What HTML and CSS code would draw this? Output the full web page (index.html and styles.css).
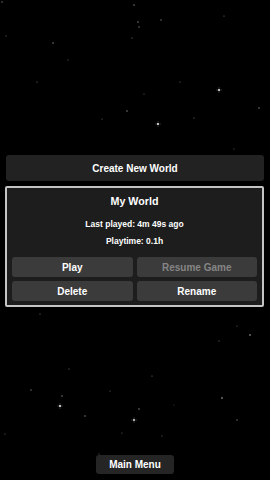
FILE: index.html
```html
<!DOCTYPE html>
<html lang="en">

<head>
    <meta charset="UTF-8" />
    <meta name="viewport" content="width=device-width, initial-scale=1.0" />
    <title>Worlds</title>
    <link rel="stylesheet" href="styles.css">
</head>

<body>
    <div class="screen">
        <!-- starfield behind everything -->
        <svg class="stars" width="270" height="480" viewBox="0 0 270 480">
            <g fill="#7a7a7a">
                <circle cx="2" cy="2" r="0.7" />
                <circle cx="134" cy="5" r="0.8" />
                <circle cx="6" cy="36" r="0.6" />
                <circle cx="53" cy="43" r="0.8" />
                <circle cx="132" cy="38" r="0.6" />
                <circle cx="68" cy="60" r="0.5" />
                <circle cx="37" cy="82" r="0.6" />
                <circle cx="127" cy="111" r="0.8" />
                <circle cx="102" cy="119" r="0.5" />
                <circle cx="138" cy="22" r="0.8" />
                <circle cx="139" cy="27" r="0.7" />
                <circle cx="161" cy="20" r="0.7" />
                <circle cx="224" cy="16" r="0.6" />
                <circle cx="180" cy="82" r="0.5" />
                <circle cx="144" cy="94" r="0.5" />
                <circle cx="259" cy="108" r="0.8" />
                <circle cx="194" cy="118" r="0.6" />
                <circle cx="234" cy="149" r="0.5" />
                <circle cx="40" cy="314" r="0.6" />
                <circle cx="69" cy="369" r="0.6" />
                <circle cx="31" cy="390" r="0.7" />
                <circle cx="62" cy="396" r="0.8" />
                <circle cx="85" cy="416" r="0.8" />
                <circle cx="110" cy="391" r="0.5" />
                <circle cx="5" cy="434" r="0.5" />
                <circle cx="122" cy="433" r="0.5" />
                <circle cx="237" cy="326" r="0.5" />
                <circle cx="250" cy="335" r="0.9" />
                <circle cx="219" cy="341" r="0.6" />
                <circle cx="152" cy="376" r="0.6" />
                <circle cx="222" cy="398" r="0.9" />
                <circle cx="139" cy="409" r="0.8" />
                <circle cx="174" cy="405" r="0.4" />
                <circle cx="237" cy="420" r="0.7" />
                <circle cx="162" cy="436" r="0.5" />
                <circle cx="99" cy="454" r="0.5" />
            </g>
            <g class="sparkle">
                <circle cx="219" cy="90" r="1.1" fill="#e0e0e0" />
                <path d="M216 90h6M219 87v6" />
                <circle cx="158" cy="124" r="1.1" fill="#e0e0e0" />
                <path d="M155 124h6M158 121v6" />
                <circle cx="60" cy="406" r="1.1" fill="#e0e0e0" />
                <path d="M57 406h6M60 403v6" />
                <circle cx="134" cy="420" r="1" fill="#d0d0d0" />
                <path d="M131 420h6M134 417v6" />
            </g>
        </svg>

        <button class="wide-btn">Create New World</button>

        <div class="world-card">
            <h2 class="world-name">My World</h2>
            <p class="world-info">Last played: 4m 49s ago</p>
            <p class="world-info playtime">Playtime: 0.1h</p>
            <div class="world-actions">
                <button class="small-btn">Play</button>
                <button class="small-btn disabled" disabled>Resume Game</button>
                <button class="small-btn">Delete</button>
                <button class="small-btn">Rename</button>
            </div>
        </div>

        <button class="menu-btn">Main Menu</button>
    </div>
</body>

</html>
```

FILE: styles.css
```css
* {
    margin: 0;
    padding: 0;
    box-sizing: border-box;
}

body {
    font-family: "Liberation Sans", Arial, sans-serif;
    background-color: #000;
    color: #fff;
}

.screen {
    position: relative;
    width: 270px;
    height: 480px;
    display: flex;
    flex-direction: column;
    padding: 155px 6px 6px 5px;
    overflow: hidden;
}

.stars {
    position: absolute;
    top: 0;
    left: 0;
}

.sparkle path {
    stroke: rgba(220, 220, 220, 0.35);
    stroke-width: 0.6;
}

button {
    font-family: inherit;
    font-weight: bold;
    color: #fff;
    border: none;
    cursor: pointer;
}

.wide-btn {
    position: relative;
    height: 26px;
    margin-left: 1px;
    background-color: #222;
    border-radius: 3px;
    font-size: 10px;
}

.world-card {
    position: relative;
    margin-top: 5px;
    background-color: #1d1d1d;
    border: 2px solid #c4c4c4;
    border-radius: 2px;
    padding: 6px 5px 4px 5px;
    text-align: center;
}

.world-name {
    font-size: 10.7px;
    line-height: 14px;
}

.world-info {
    font-size: 8.5px;
    font-weight: bold;
    line-height: 12px;
    margin-top: 10px;
}

.world-info.playtime {
    margin-top: 5px;
}

.world-actions {
    display: grid;
    grid-template-columns: 1fr 1fr;
    grid-auto-rows: 20px;
    gap: 4px;
    margin-top: 10px;
}

.small-btn {
    background-color: #3b3b3b;
    border-radius: 3px;
    font-size: 10px;
}

.small-btn.disabled {
    color: #858585;
    cursor: default;
}

.menu-btn {
    position: relative;
    align-self: center;
    margin-top: auto;
    margin-left: 1px;
    width: 78px;
    height: 19px;
    background-color: #252525;
    border-radius: 3px;
    font-size: 10px;
}
```
